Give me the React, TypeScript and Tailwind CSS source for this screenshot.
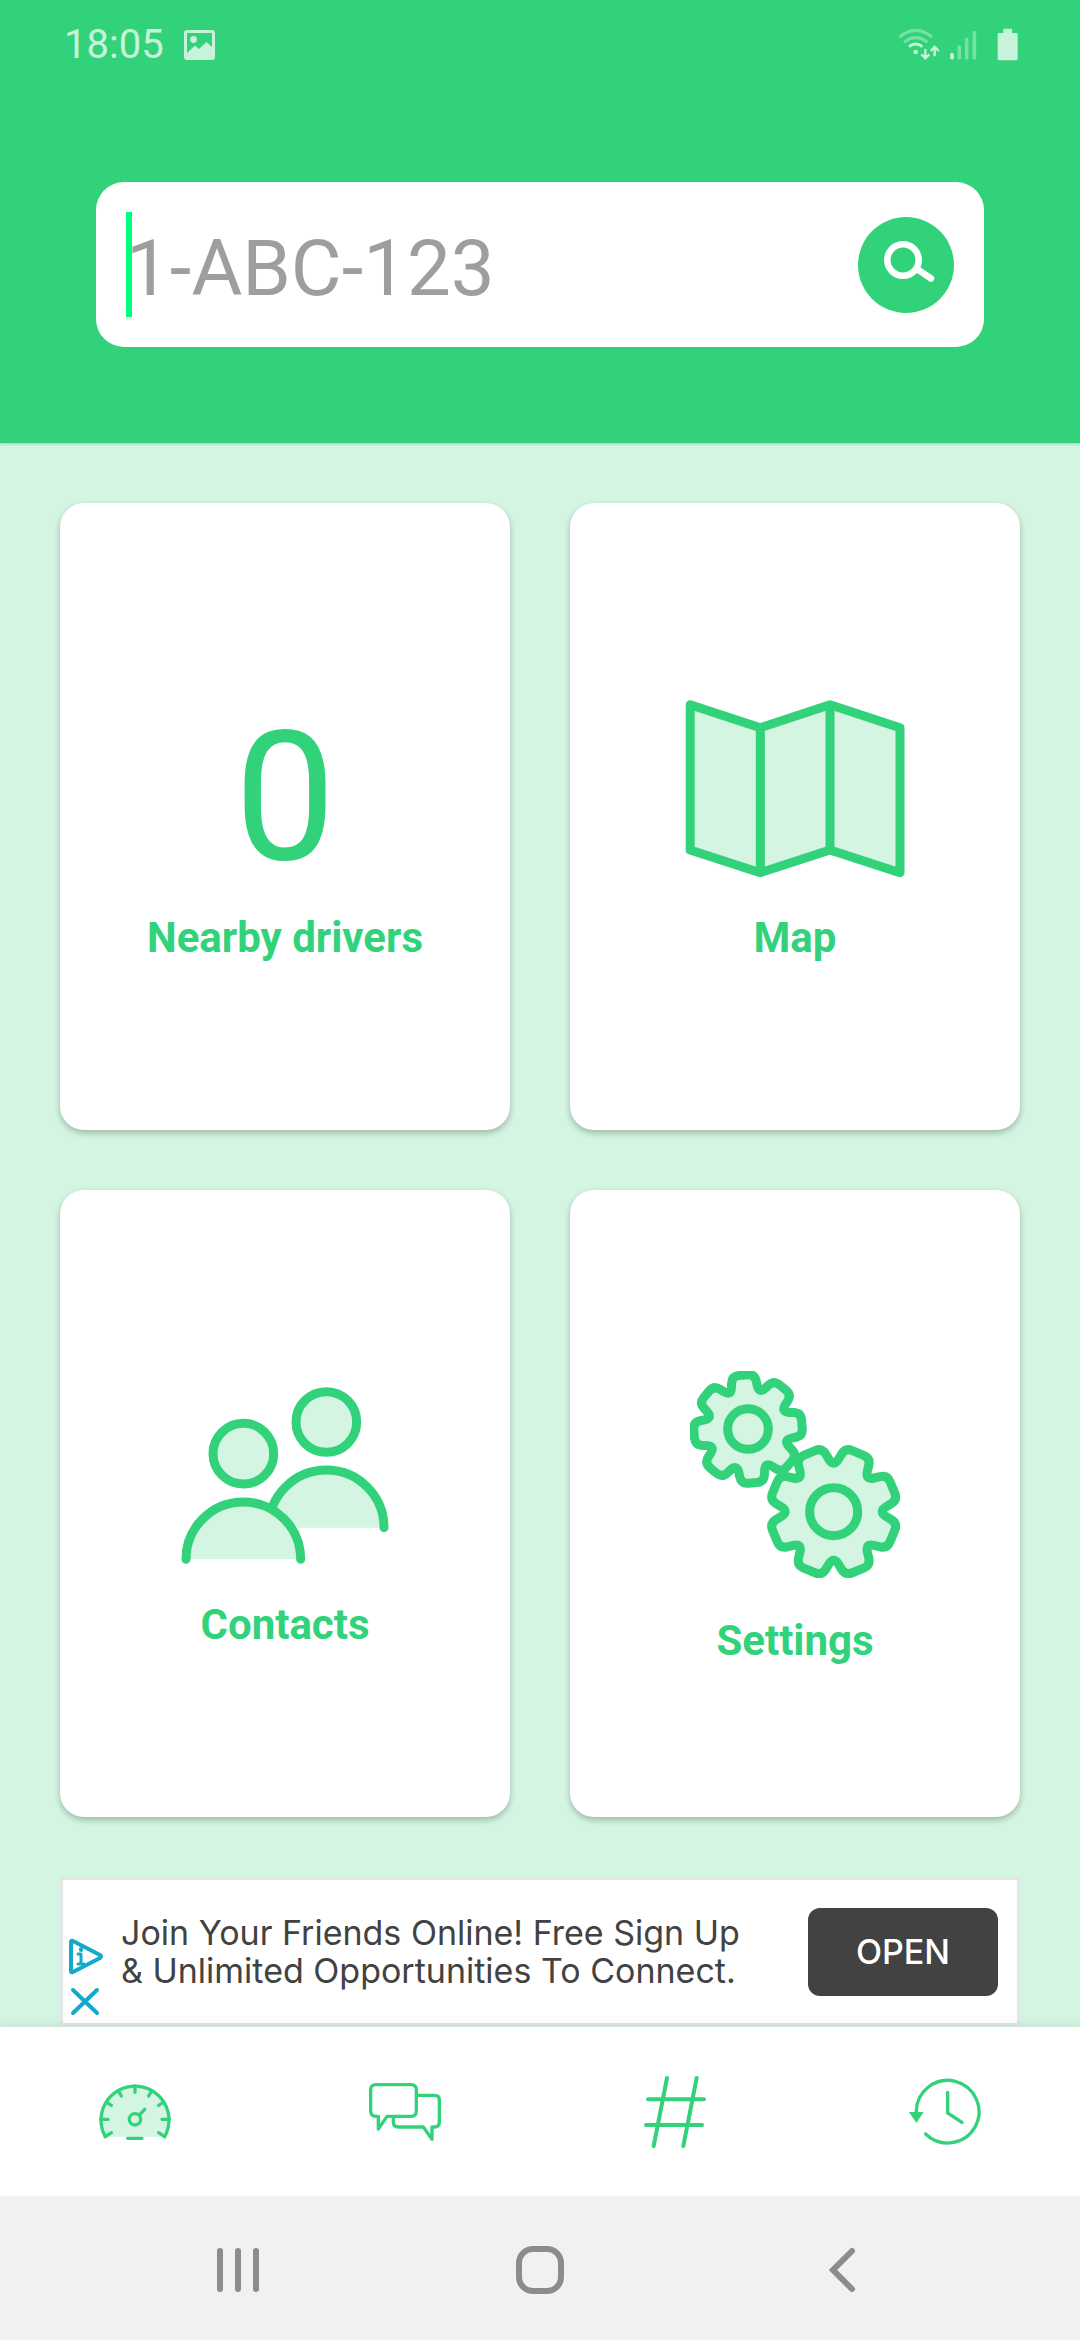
import React from 'react';

const GREEN = '#32d27b';
const PALE = '#d3f5e2';

/* Outline of an eight-toothed gear with softened corners. */
function gearPath(cx: number, cy: number, tip: number, root: number, half: number, start: number) {
  const pts: { x: number; y: number; d: number }[] = [];
  const add = (r: number, deg: number, d: number) => {
    const a = (deg * Math.PI) / 180;
    pts.push({ x: cx + r * Math.cos(a), y: cy + r * Math.sin(a), d });
  };
  for (let i = 0; i < 8; i++) {
    const a = start + i * 45;
    add(tip, a - half, 22);
    add(tip, a + half, 22);
    add(root, a + 22.5, 27);
  }
  const n = pts.length;
  const toward = (p: { x: number; y: number }, q: { x: number; y: number }, d: number) => {
    const l = Math.hypot(q.x - p.x, q.y - p.y);
    return `${(p.x + ((q.x - p.x) * d) / l).toFixed(1)} ${(p.y + ((q.y - p.y) * d) / l).toFixed(1)}`;
  };
  return (
    pts
      .map((p, i) => {
        const a = toward(p, pts[(i + n - 1) % n], p.d);
        const b = toward(p, pts[(i + 1) % n], p.d);
        return `${i === 0 ? 'M' : 'L'}${a}Q${p.x.toFixed(1)} ${p.y.toFixed(1)} ${b}`;
      })
      .join('') + 'Z'
  );
}

function MapIcon() {
  return (
    <svg className="h-[177px] w-[220px]" viewBox="73 59 660 531" fill={PALE} stroke={GREEN} strokeWidth="27" strokeLinejoin="round" aria-hidden="true">
      <path d="M88.500 73 299 142 508 73 718 142V577L508 509 299 577 88.500 509Z" />
      <path d="M299 142V577M508 73V509" />
    </svg>
  );
}

function ContactsIcon() {
  return (
    <svg className="h-[177px] w-[208px]" viewBox="62 51 624 531" fill={PALE} stroke={GREEN} strokeWidth="27" strokeLinecap="round" aria-hidden="true">
      <circle cx="498" cy="156" r="91" />
      <path d="M325 473A173 173 0 0 1 671 473" />
      <circle cx="249" cy="251" r="91" />
      <path fill="#fff" stroke="none" d="M63 568A186 186 0 0 1 260 382L435 568V582H63Z" />
      <path d="M77 568A172 172 0 0 1 421 568" />
    </svg>
  );
}

function GearsIcon() {
  return (
    <svg className="h-[207px] w-[210px]" viewBox="54 63 630 621" fill={PALE} stroke={GREEN} strokeWidth="27" strokeLinejoin="round" aria-hidden="true">
      <path d={gearPath(228, 237, 166, 110, 12, -5)} />
      <circle cx="228" cy="237" r="61" />
      <path d={gearPath(485, 485, 195, 134, 12, 22.5)} />
      <circle cx="485" cy="485" r="72" />
    </svg>
  );
}

function Card({ label, children }: { label: string; children: React.ReactNode }) {
  return (
    <button className="flex min-h-[627px] flex-col items-center justify-center rounded-[24px] bg-white pt-[30px] text-[42px] leading-[50px] font-bold shadow-[0_3px_6px_rgba(0,0,0,0.25)]">
      {children}
      <span>{label}</span>
    </button>
  );
}

function StatusBar() {
  return (
    <div className="flex h-[90px] items-center justify-between pr-[62px] pl-[64px] text-[#c8f3da]">
      <div className="flex items-center gap-5">
        <span className="text-[40px] leading-[48px]">18:05</span>
        <svg className="h-[30px] w-[31px]" viewBox="0 0 31 30" fill="currentColor" aria-hidden="true">
          <path fillRule="evenodd" d="M3 0H28Q31 0 31 3V27Q31 30 28 30H3Q0 30 0 27V3Q0 0 3 0ZM3 3V23L11 15.500 15 19 22.500 12 28 17V3Z" />
          <circle cx="9.500" cy="9.500" r="3.400" />
        </svg>
      </div>
      <svg className="h-[34px] w-[120px]" viewBox="112 80 360 102" fill="none" stroke="currentColor" aria-hidden="true">
        <g strokeWidth="9">
          <path opacity=".45" d="M116 107Q165 67 214 107M130 123Q165 95 200 123" />
          <path d="M145 136Q165 120 185 136" />
        </g>
        <circle cx="165" cy="152" r="7" fill="currentColor" stroke="none" />
        <path strokeWidth="7" d="M194 143V169M182 159 194 171 206 159M222 165V139M210 149 222 136 234 149" />
        <g strokeWidth="11" strokeLinecap="round">
          <path d="M274 160V169" />
          <path opacity=".45" d="M296 137V169M318 114V169M341 94V169" />
        </g>
        <path fill="currentColor" stroke="none" d="M428 82H454V95H467Q471 95 471 99V173Q471 177 467 177H415Q411 177 411 173V99Q411 95 415 95H428Z" />
      </svg>
    </div>
  );
}

function AdBanner() {
  return (
    <aside className="mx-[60px] mt-[60px] flex h-[149px] items-center border-[3px] border-[#e3e6e6] bg-white pr-[19px] font-[Inter,sans-serif] text-[#424242]">
      <svg className="mt-[50px] h-[78px] w-[40px] shrink-0" viewBox="0 0 40 78" fill="none" stroke="#12aac8" strokeWidth="4" strokeLinecap="round" strokeLinejoin="round" aria-hidden="true">
        <path d="M8 4V33Q8 35 10 34L37 20Q39 18 37 17L10 3Q8 2 8 4Z" />
        <path d="M15 16H18V26M15 26H21" strokeWidth="3" />
        <path d="M18 11V12" />
        <path d="M10 52 34 75M34 52 10 75" />
      </svg>
      <p className="ml-[18px] flex-1 text-[34px] leading-[38px] whitespace-nowrap">
        Join Your Friends Online! Free Sign Up
        <br />
        &amp; Unlimited Opportunities To Connect.
      </p>
      <button className="h-[88px] w-[190px] shrink-0 rounded-[12px] bg-[#424242] text-[34px] font-medium text-white">OPEN</button>
    </aside>
  );
}

function TabBar() {
  const icon = 'h-[72px] w-[72px]';
  const tab = 'flex items-center justify-center';
  return (
    <nav className="relative grid h-[169px] grid-cols-4 bg-white shadow-[0_-2px_10px_rgba(0,0,0,0.07)]">
      <button className={tab} aria-label="Dashboard">
        <svg className={icon} viewBox="117 78 216 216" fill="none" stroke={GREEN} strokeWidth="10" strokeLinecap="round">
          <path fill={PALE} strokeLinejoin="round" d="M136 260A102 102 0 1 1 314 260" />
          <path d="M136 260 154 248M314 260 296 248M122 208H144M328 208H306M140 157 154 166M310 157 296 166M175 122 184 138M275 122 266 138M225 108V127M203 265H246M239 194 254 178" />
          <circle cx="225" cy="208" r="17" />
        </svg>
      </button>
      <button className={tab} aria-label="Messages">
        <svg className={icon} viewBox="927 78 216 216" fill="none" stroke={GREEN} strokeWidth="10" strokeLinecap="round" strokeLinejoin="round">
          <path d="M948 104H1053Q1069 104 1069 120V183Q1069 199 1053 199H981L955 237V199H948Q932 199 932 183V120Q932 104 948 104Z" />
          <path d="M1073 136H1124Q1138 136 1138 150V217Q1138 231 1124 231H1116V268L1090 231H1015Q1000 231 1000 217V201" />
        </svg>
      </button>
      <button className={tab} aria-label="Hashtags">
        <svg className={icon} viewBox="117 78 216 216" fill="none" stroke={GREEN} strokeWidth="12" strokeLinecap="round">
          <path d="M201 84 161 288M290 84 250 288M144 148H312M138 225H306" />
        </svg>
      </button>
      <button className={tab} aria-label="History">
        <svg className={icon} viewBox="927 78 216 216" fill="none" stroke={GREEN} strokeWidth="10" strokeLinecap="round" strokeLinejoin="round">
          <path d="M949 187A94 94 0 1 1 977 252" />
          <path d="M1043 127V189L1086 217" />
          <path fill={GREEN} stroke="none" d="M927 186H971L949 219Z" />
        </svg>
      </button>
    </nav>
  );
}

function SystemBar() {
  const key = 'flex items-center justify-center';
  return (
    <nav className="relative grid h-[144px] grid-cols-3 bg-[#f1f1f1] px-[87px] pt-1">
      <button className={key} aria-label="Recent apps">
        <svg className="size-12" viewBox="0 0 48 48" stroke="#8c8c8c" strokeWidth="6" strokeLinecap="round">
          <path d="M6 5V43M24 5V43M42 5V43" />
        </svg>
      </button>
      <button className={key} aria-label="Home">
        <span className="size-12 rounded-[17px] border-[6px] border-[#8c8c8c]" />
      </button>
      <button className={key} aria-label="Back">
        <svg className="size-12" viewBox="0 0 48 48" fill="none" stroke="#8c8c8c" strokeWidth="6" strokeLinecap="round">
          <path d="M34 5 15 24 34 43" />
        </svg>
      </button>
    </nav>
  );
}

export default function App() {
  return (
    <div className="flex min-h-screen flex-col bg-[#d3f5e2] font-[Roboto,sans-serif] text-[#32d27b]">
      <header className="bg-[#32d27b] pb-24 shadow-[0_1px_3px_rgba(0,0,0,0.2)]">
        <StatusBar />
        <form className="mx-24 mt-[92px] flex h-[165px] items-center rounded-[28px] bg-white px-[30px]" onSubmit={(e) => e.preventDefault()}>
          <span className="h-[105px] w-[6px] shrink-0 bg-[#00ff7b]" />
          <input
            type="text"
            aria-label="Plate number"
            placeholder="1-ABC-123"
            className="-ml-[6px] h-[105px] min-w-0 flex-1 bg-transparent pt-2 text-[78px] text-[#424242] outline-none placeholder:text-[#9e9e9e]"
          />
          <button type="submit" aria-label="Search" className="size-24 shrink-0 rounded-full bg-[#32d27b]">
            <svg className="size-24" viewBox="0 0 96 96" fill="none" stroke="#fff" strokeWidth="6.500" strokeLinecap="round">
              <circle cx="45" cy="43" r="15.700" />
              <path d="M59 52 73 61.500" />
            </svg>
          </button>
        </form>
      </header>

      <main className="flex-1">
        <div className="grid grid-cols-2 gap-[60px] px-[60px] pt-[60px]">
          <Card label="Nearby drivers">
            <span className="mb-[18px] text-[180px] leading-[195px] font-normal">0</span>
          </Card>
          <Card label="Map">
            <span className="mb-9">
              <MapIcon />
            </span>
          </Card>
          <Card label="Contacts">
            <span className="mb-9">
              <ContactsIcon />
            </span>
          </Card>
          <Card label="Settings">
            <span className="mb-[38px]">
              <GearsIcon />
            </span>
          </Card>
        </div>
        <AdBanner />
      </main>

      <TabBar />
      <SystemBar />
    </div>
  );
}
